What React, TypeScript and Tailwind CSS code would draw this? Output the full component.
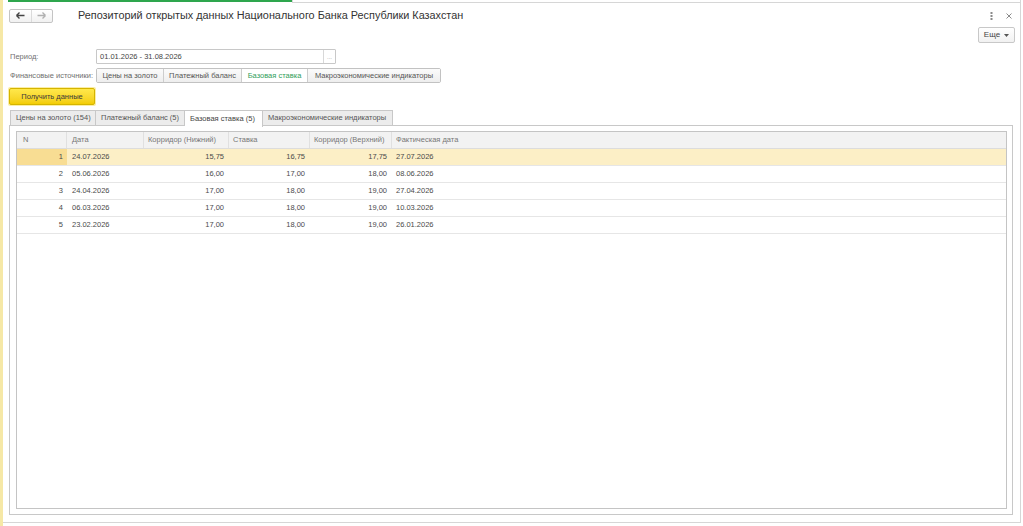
import * as React from 'react';

const rows = [
  { n: 1, date: '24.07.2026', low: '15,75', rate: '16,75', high: '17,75', fact: '27.07.2026' },
  { n: 2, date: '05.06.2026', low: '16,00', rate: '17,00', high: '18,00', fact: '08.06.2026' },
  { n: 3, date: '24.04.2026', low: '17,00', rate: '18,00', high: '19,00', fact: '27.04.2026' },
  { n: 4, date: '06.03.2026', low: '17,00', rate: '18,00', high: '19,00', fact: '10.03.2026' },
  { n: 5, date: '23.02.2026', low: '17,00', rate: '18,00', high: '19,00', fact: '26.01.2026' },
];

const sources = [
  { label: 'Цены на золото', w: 'w-[66px]' },
  { label: 'Платежный баланс', w: 'w-[78px]' },
  { label: 'Базовая ставка', w: 'w-[66px]' },
  { label: 'Макроэкономические индикаторы', w: 'w-[133px]' },
];

const tabs = [
  { label: 'Цены на золото (154)', w: 'w-[86px]' },
  { label: 'Платежный баланс (5)', w: 'w-[89px]' },
  { label: 'Базовая ставка (5)', w: 'w-[78px]' },
  { label: 'Макроэкономические индикаторы', w: 'w-[130px]' },
];

function Arrow({ dir, color }: { dir: 'left' | 'right'; color: string }) {
  return (
    <svg width="9" height="7" viewBox="0 0 9 7" className={dir === 'right' ? 'rotate-180' : ''}>
      <path d="M0.5 3.5 L8.5 3.5 M0.5 3.5 L3.5 0.5 M0.5 3.5 L3.5 6.5" stroke={color} strokeWidth="1.4" fill="none" />
    </svg>
  );
}

export default function App() {
  return (
    <div className="flex h-[526px] w-full bg-white font-['Liberation_Sans',Arial,sans-serif] text-[7.5px] text-[#4a4a4a] overflow-hidden">
      {/* left accent strip */}
      <div className="w-[3px] h-full bg-[#f6e8a6]" />

      <div className="flex flex-col w-[1018px] h-[523px] border-r border-b border-[#d6d6d6]">
        {/* window tab strip */}
        <div className="flex h-[3px] shrink-0">
          <div className="w-[5px]" />
          <div className="w-[284px] h-[2px] bg-[#2ea64d]" />
          <div className="flex-1 h-[3px] border-l border-b border-[#d6d6d6]" />
        </div>

        {/* header */}
        <div className="flex items-center h-[13px] mt-[6px] pl-[6px] pr-[8px]">
          <div className="flex h-[14px] w-[44px] rounded-[2px] border border-[#c4c4c4] bg-gradient-to-b from-white to-[#f1f1f1]">
            <div className="flex flex-1 items-center justify-center border-r border-[#dadada]">
              <Arrow dir="left" color="#444" />
            </div>
            <div className="flex flex-1 items-center justify-center">
              <Arrow dir="right" color="#b0b0b0" />
            </div>
          </div>
          <div className="ml-[25px] text-[10.85px] text-[#333] leading-none">
            Репозиторий открытых данных Национального Банка Республики Казахстан
          </div>
          <div className="ml-auto flex items-center gap-[13px]">
            <svg width="3" height="8" viewBox="0 0 3 8">
              <rect x="0.5" y="0" width="2" height="2" fill="#8a8a8a" />
              <rect x="0.5" y="3" width="2" height="2" fill="#8a8a8a" />
              <rect x="0.5" y="6" width="2" height="2" fill="#8a8a8a" />
            </svg>
            <svg width="6" height="6" viewBox="0 0 6 6">
              <path d="M0.5 0.5 L5.5 5.5 M5.5 0.5 L0.5 5.5" stroke="#8a8a8a" strokeWidth="1" />
            </svg>
          </div>
        </div>

        {/* more button */}
        <div className="flex justify-end h-[16px] mt-[5px] pr-[5px]">
          <div className="flex items-center gap-[4px] h-[16px] w-[37px] justify-center rounded-[2px] border border-[#c8c8c8] bg-gradient-to-b from-white to-[#f1f1f1] text-[8px] text-[#444]">
            <span>Еще</span>
            <svg width="5" height="3" viewBox="0 0 5 3">
              <path d="M0 0 L5 0 L2.5 3 Z" fill="#555" />
            </svg>
          </div>
        </div>

        {/* period */}
        <div className="flex items-center h-[15px] mt-[6px] pl-[7px]">
          <div className="w-[86px] text-[#707070]">Период:</div>
          <div className="flex h-[15px] w-[240px] border border-[#c8c8c8] rounded-[1px]">
            <div className="flex-1 flex items-center pl-[3px] text-[#444]">01.01.2026 - 31.08.2026</div>
            <div className="w-[12px] flex items-end justify-center pb-[3px] border-l border-[#d8d8d8] text-[#999] leading-none text-[6px]">
              ...
            </div>
          </div>
        </div>

        {/* sources */}
        <div className="flex items-center h-[15px] mt-[4px] pl-[7px]">
          <div className="w-[86px] text-[#707070]">Финансовые источники:</div>
          <div className="flex h-[15px] border border-[#c2c2c2] rounded-[2px]">
            {sources.map((s, i) => {
              const active = i === 2;
              return (
                <div
                  key={s.label}
                  className={`flex items-center justify-center ${s.w} ${i > 0 ? 'border-l border-[#cdcdcd]' : ''} ${
                    active ? 'bg-white text-[#2f9e5a]' : 'bg-gradient-to-b from-[#fbfbfb] to-[#eeeeee] text-[#555]'
                  }`}
                >
                  {s.label}
                </div>
              );
            })}
          </div>
        </div>

        {/* get data */}
        <div className="mt-[4px] ml-[5px] h-[19px] w-[88px] rounded-[2px] p-px bg-[#fbeea6]">
          <div className="flex items-center justify-center h-full rounded-[2px] border border-[#d5b400] bg-gradient-to-b from-[#ffe84a] to-[#f3cd00] text-[#3a3a3a]">
            Получить данные
          </div>
        </div>

        {/* tabs */}
        <div className="flex h-[16px] mt-[4px] ml-[7px] relative z-10">
          {tabs.map((t, i) => {
            const active = i === 2;
            return (
              <div
                key={t.label}
                className={`flex items-center pl-[5px] ${t.w} border-t border-r border-[#c8c8c8] ${i === 0 ? 'border-l' : ''} ${
                  active ? 'bg-white h-[17px] text-[#444]' : 'bg-[#ececec] h-[16px] border-b text-[#555]'
                }`}
              >
                {t.label}
              </div>
            );
          })}
        </div>

        {/* tab panel */}
        <div className="flex flex-col h-[390px] mt-[-1px] ml-[6px] mr-[7px] border border-[#c8c8c8] pt-[5px] pl-[6px] pr-[5px] pb-[5px]">
          <div className="flex-1 border border-[#c4c4c4] flex flex-col">
            <div className="flex h-[17px] bg-[#f2f2f2] border-b border-[#dcdcdc] text-[#777]">
              <div className="w-[50px] flex items-center pl-[6px] border-r border-[#e0e0e0]">N</div>
              <div className="w-[77px] flex items-center pl-[5px] border-r border-[#e0e0e0]">Дата</div>
              <div className="w-[85px] flex items-center pl-[4px] border-r border-[#e0e0e0]">Корридор (Нижний)</div>
              <div className="w-[81px] flex items-center pl-[4px] border-r border-[#e0e0e0]">Ставка</div>
              <div className="w-[82px] flex items-center pl-[4px] border-r border-[#e0e0e0]">Корридор (Верхний)</div>
              <div className="flex-1 flex items-center pl-[4px]">Фактическая дата</div>
            </div>
            {rows.map((r, i) => {
              const sel = i === 0;
              return (
                <div
                  key={r.n}
                  className={`flex h-[17px] border-b border-[#e6e6e6] ${sel ? 'bg-[#fcefc6]' : 'bg-white'}`}
                >
                  <div className={`w-[50px] flex items-center justify-end pr-[4px] ${sel ? 'bg-[#f8dd93]' : ''}`}>{r.n}</div>
                  <div className="w-[77px] flex items-center pl-[5px]">{r.date}</div>
                  <div className="w-[85px] flex items-center justify-end pr-[5px]">{r.low}</div>
                  <div className="w-[81px] flex items-center justify-end pr-[5px]">{r.rate}</div>
                  <div className="w-[82px] flex items-center justify-end pr-[5px]">{r.high}</div>
                  <div className="flex-1 flex items-center pl-[4px]">{r.fact}</div>
                </div>
              );
            })}
          </div>
        </div>
      </div>
    </div>
  );
}
